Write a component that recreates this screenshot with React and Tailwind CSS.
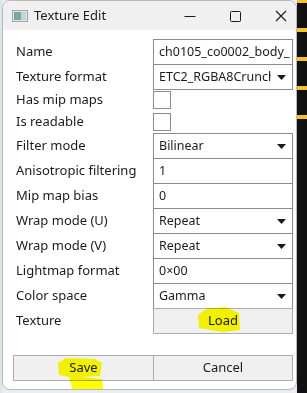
import React from 'react';

const font = { fontFamily: '"Noto Sans", "Open Sans", sans-serif' };

function Caret() {
  return (
    <svg width="9" height="5" viewBox="0 0 9 5" className="ml-[6px] shrink-0">
      <path d="M0 0h9L4.5 5z" fill="#1a1a1a" />
    </svg>
  );
}

function Field({ value, select }) {
  return (
    <div
      className={`flex h-[26px] w-[140px] shrink-0 items-center overflow-hidden border border-[#8c8c8c] bg-white pl-[5px] ${
        select ? 'pr-[6px]' : 'pr-[1px]'
      }`}
    >
      <span className="min-w-0 flex-1 overflow-hidden whitespace-nowrap text-[12.5px]">{value}</span>
      {select && <Caret />}
    </div>
  );
}

function Row({ label, children, h = 'h-[25px]' }) {
  return (
    <div className={`flex ${h} items-start`}>
      <div className="flex h-full w-[140px] shrink-0 items-center pl-[3px]">{label}</div>
      {children}
    </div>
  );
}

function Checkbox() {
  return (
    <div className="flex h-full items-center">
      <div className="h-[18px] w-[18px] border border-[#8c8c8c] bg-white" />
    </div>
  );
}

export default function App() {
  const fields = [
    ['Filter mode', 'Bilinear', true],
    ['Anisotropic filtering', '1', false],
    ['Mip map bias', '0', false],
    ['Wrap mode (U)', 'Repeat', true],
    ['Wrap mode (V)', 'Repeat', true],
    ['Lightmap format', '0×00', false],
    ['Color space', 'Gamma', true],
  ];

  return (
    <div className="flex h-[393px] w-[307px] overflow-hidden bg-[#e9edf1] text-[13px] text-[#1b1b1b]" style={font}>
      <div className="w-[2px] shrink-0 bg-[#dce4ec]" />
      <div className="relative flex h-[390px] w-[295px] shrink-0 flex-col overflow-hidden rounded-[8px] border border-[#b9b9b9] bg-white">
        {/* title bar */}
        <div className="flex h-[29px] shrink-0 items-center bg-[#f0f0f0]">
          <svg width="16" height="12" viewBox="0 0 16 12" className="ml-[9px]">
            <rect x="0.5" y="0.5" width="15" height="11" fill="#dfe6e4" stroke="#9aa5a8" />
            <rect x="2" y="2" width="7" height="8" fill="#7fa59a" />
            <rect x="9" y="2" width="5" height="8" fill="#c5d4dc" />
          </svg>
          <span className="ml-[6px] text-[13px] text-[#1b1b1b]">Texture Edit</span>
          <div className="flex-1" />
          <svg width="12" height="12" viewBox="0 0 12 12" className="mr-[33px]">
            <path d="M0.5 6.5h11" stroke="#1b1b1b" strokeWidth="1" />
          </svg>
          <svg width="12" height="12" viewBox="0 0 12 12" className="mr-[34px]">
            <rect x="1.5" y="1.5" width="10" height="10" rx="1" fill="none" stroke="#1b1b1b" />
          </svg>
          <svg width="12" height="12" viewBox="0 0 12 12" className="mr-[9px]">
            <path d="M1 1l10 10M11 1L1 11" stroke="#1b1b1b" strokeWidth="1.1" />
          </svg>
        </div>

        {/* body */}
        <div className="flex flex-col pl-[10px] pt-[9px]">
          <Row label="Name">
            <Field value="ch0105_co0002_body_" />
          </Row>
          <Row label="Texture format">
            <Field value="ETC2_RGBA8Crunch" select />
          </Row>
          <Row label="Has mip maps" h="h-[22px]">
            <Checkbox />
          </Row>
          <Row label="Is readable" h="h-[22px]">
            <Checkbox />
          </Row>
          {fields.map(([label, value, select]) => (
            <Row key={label} label={label}>
              <Field value={value} select={select} />
            </Row>
          ))}
          <Row label="Texture">
            <button className="h-[26px] w-[140px] border border-[#adadad] bg-[#f0f0f0]">Load</button>
          </Row>
          <div className="mt-[22px] flex">
            <button className="h-[26px] w-[141px] border border-[#adadad] bg-[#f0f0f0]">Save</button>
            <button className="-ml-px h-[26px] w-[140px] border border-[#adadad] bg-[#f0f0f0]">Cancel</button>
          </div>
        </div>

        {/* marker highlights */}
        <svg className="pointer-events-none absolute left-0 top-0 mix-blend-multiply" width="295" height="390" viewBox="0 0 295 390">
          <path d="M195 314 L203 308 L222 306 L236 312 L237 329 L220 331 L196 327 Z" fill="#ffff00" />
          <path d="M55 362 L63 357 L92 358 L99 362 L97 375 L78 376 L99 378 L100 388 L70 390 L66 376 L56 374 Z" fill="#ffff00" />
        </svg>
      </div>
      <div className="flex flex-1 flex-col bg-[#111]">
        <div className="h-[3px] bg-[#f2c230]" />
        <div className="h-[25px]" />
        <div className="h-[4px] bg-[#f2c230]" />
        <div className="h-[25px]" />
        <div className="h-[4px] bg-[#f2c230]" />
        <div className="h-[25px]" />
        <div className="h-[4px] bg-[#f2c230]" />
        <div className="h-[25px]" />
        <div className="h-[4px] bg-[#f2c230]" />
      </div>
    </div>
  );
}
